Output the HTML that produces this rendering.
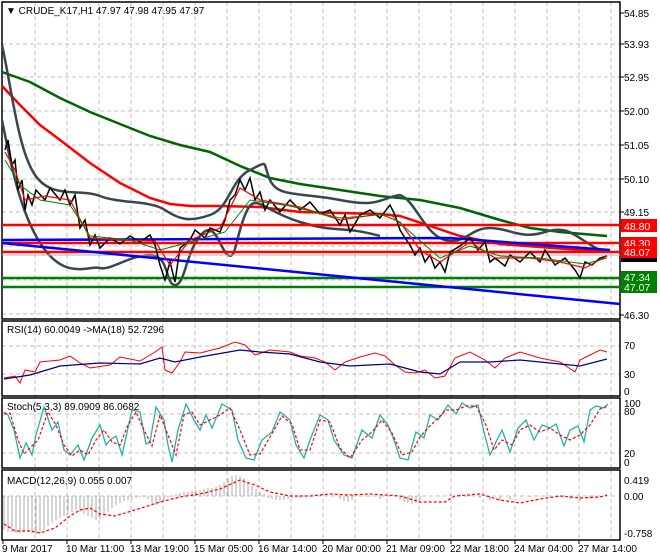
<!DOCTYPE html>
<html><head><meta charset="utf-8"><style>
html,body{margin:0;padding:0;background:#fff;}
svg{display:block;font-family:"Liberation Sans",Arial,sans-serif;}
</style></head><body>
<svg width="660" height="560" viewBox="0 0 660 560" xmlns="http://www.w3.org/2000/svg">
<rect width="660" height="560" fill="#fff"/>
<g stroke="#c0c0c0" stroke-dasharray="4,3" stroke-width="1">
<path d="M35 2V540M67 2V540M99 2V540M131 2V540M163 2V540M195 2V540M227 2V540M259 2V540M291 2V540M323 2V540M355 2V540M387 2V540M419 2V540M451 2V540M483 2V540M515 2V540M547 2V540M579 2V540M611 2V540"/>
<path d="M2 44H620M2 77H620M2 111H620M2 145H620M2 179H620M2 212H620M2 246H620M2 280H620M2 314H620"/>
<path d="M2 346H620M2 374H620M2 414H620M2 453H620M2 496H620"/>
</g>
<g fill="none" stroke="#000" stroke-width="1.5">
<rect x="2" y="2" width="618" height="317"/>
<rect x="2" y="321" width="618" height="75"/>
<rect x="2" y="398" width="618" height="70"/>
<rect x="2" y="470" width="618" height="70"/>
</g>
<polyline fill="none" stroke="#006400" stroke-width="2.5" points="2,72 30,82 60,98 90,112 120,124 150,136 180,145 210,152 240,166 270,178 300,184 340,190 380,196 420,200 460,208 500,220 530,228 560,232 607,236"/>
<polyline fill="none" stroke="#ff0000" stroke-width="2.5" points="2,86 20,105 40,125 60,140 90,163 120,183 150,198 170,204 190,206 220,206 260,207 300,212 340,213 380,214 400,216 430,226 460,236 500,244 540,247 580,250 607,251"/>
<g fill="none" stroke="#37474f" stroke-width="2.5">
<path d="M2 45C12 90 18 150 35 175S80 188 100 196 150 200 165 210 190 222 210 215 230 180 250 170 262 162 270 180 300 192 340 200 380 198 400 195 C415 200 425 235 445 240 S470 228 490 228 520 240 545 232 575 238 600 250"/>
<path d="M2 120C12 170 22 220 45 250S90 265 100 268 130 255 150 255 165 285 175 285 185 255 200 236 220 250 228 255 235 240 245 215 260 210 300 222 340 225 380 236 395 245 C410 252 420 272 440 275 S470 265 480 262 510 272 540 268 570 268 578 275 600 268"/>
</g>
<g stroke-width="2.5">
<path d="M2 225H620M2 243H620M2 252H620" stroke="#ff0000"/>
<path d="M2 278H620M2 287H620" stroke="#008000"/>
</g>
<path d="M2 255H620" stroke="#b0b0b0" stroke-width="1"/>
<polyline fill="none" stroke="#0000ff" stroke-width="2.5" points="2,243 620,304"/>
<polyline fill="none" stroke="#0000ff" stroke-width="2.5" points="2,240 450,238 610,250"/>
<polyline fill="none" stroke="#000" stroke-width="1.5" points="5,150 8,140 12,165 15,160 18,190 22,180 25,210 28,195 32,205 36,190 45,200 50,188 60,200 65,190 70,205 75,195 80,228 85,220 90,245 95,235 100,248 110,238 120,244 130,236 140,242 150,235 155,245 160,265 165,280 170,262 175,282 180,248 190,240 195,230 205,238 210,228 220,232 225,220 230,200 235,195 240,180 245,190 250,178 255,200 260,192 265,210 270,200 280,212 290,200 300,210 310,202 320,214 330,210 340,225 345,215 350,232 356,222 360,215 370,210 380,218 390,205 395,215 400,230 405,238 410,245 415,255 420,248 425,262 430,255 435,268 440,262 445,272 450,252 460,246 470,238 478,250 485,242 490,262 495,258 505,266 510,255 520,262 530,252 540,262 545,250 555,265 565,258 575,270 580,278 585,262 592,265 600,258 607,256"/>
<polyline fill="none" stroke="#ff0000" stroke-width="1.2" points="5,152 15,170 25,200 45,196 70,200 90,238 120,240 155,241 170,265 190,240 220,228 240,188 260,200 300,207 340,220 380,214 400,222 420,250 440,262 470,242 495,258 530,258 560,262 585,268 607,256"/>
<polyline fill="none" stroke="#008000" stroke-width="1" points="5,160 20,185 40,200 70,205 90,236 130,240 160,250 190,242 225,232 250,200 290,206 340,218 390,214 410,232 440,258 470,246 500,256 540,258 585,264 607,258"/>
<g font-size="10" fill="#000">
<text x="624" y="17">54.85</text><text x="624" y="48">53.93</text><text x="624" y="81">52.95</text>
<text x="624" y="115">52.00</text><text x="624" y="149">51.05</text><text x="624" y="183">50.10</text>
<text x="624" y="216">49.15</text><text x="624" y="319">46.30</text>
</g>
<g font-size="10.5">
<rect x="621" y="219" width="36" height="13" fill="#ff0000"/><text x="624" y="230" fill="#fff">48.80</text>
<rect x="621" y="237" width="36" height="13" fill="#ff0000"/><text x="624" y="247" fill="#fff">48.30</text>
<rect x="621" y="246" width="36" height="12" fill="#ff0000"/><text x="624" y="256" fill="#fff">48.07</text>
<rect x="621" y="258" width="36" height="4" fill="#000"/>
<rect x="621" y="271" width="36" height="12" fill="#008000"/><text x="624" y="281" fill="#fff">47.34</text>
<rect x="621" y="281" width="36" height="12" fill="#008000"/><text x="624" y="291" fill="#fff">47.07</text>
</g>
<g stroke="#000"><path d="M620 13h4M620 44h4M620 77h4M620 111h4M620 145h4M620 179h4M620 212h4M620 315h4"/></g>
<text x="6" y="14" font-size="10">▼ CRUDE_K17,H1  47.97 47.98 47.95 47.97</text>
<text x="7" y="333" font-size="10">RSI(14) 60.0049  -&gt;MA(18) 52.7296</text>
<polyline fill="none" stroke="#ff0000" stroke-width="1" points="4,378 15,376 20,383 25,370 35,372 40,362 60,360 70,356 80,363 90,368 110,365 120,357 140,361 155,352 162,347 165,370 172,373 180,362 185,352 200,353 220,348 235,342 245,345 255,355 270,350 290,352 300,356 315,358 325,362 335,370 345,362 360,357 375,353 385,356 395,365 405,372 415,373 425,370 435,378 445,376 455,358 470,352 485,360 495,368 505,358 520,352 540,358 560,362 575,372 580,360 590,355 600,350 607,352"/>
<polyline fill="none" stroke="#000080" stroke-width="1.2" points="4,379 30,375 60,366 100,363 140,364 160,358 175,362 200,357 240,350 260,352 290,354 320,362 350,366 390,364 420,372 440,374 460,362 490,362 520,360 560,364 580,366 607,359"/>
<g font-size="10"><text x="624" y="349">70</text><text x="624" y="378">30</text><text x="624" y="395">0</text></g>
<text x="7" y="410" font-size="10">Stoch(5,3,3) 89.0909 86.0682</text>
<polyline fill="none" stroke="#20b2aa" stroke-width="1.3" points="4,412 8,415 14,430 20,458 26,443 32,455 36,435 44,407 52,430 58,422 64,450 70,455 78,445 84,460 92,438 100,425 106,445 110,440 116,436 122,455 132,410 140,412 146,444 150,442 156,407 164,420 168,445 172,462 178,430 186,404 194,420 200,430 206,415 212,428 222,404 232,410 238,440 246,458 254,460 262,440 272,432 280,412 290,420 296,445 304,458 310,440 320,415 328,420 334,440 344,455 352,458 362,430 372,438 380,415 388,425 394,440 400,458 408,460 416,432 424,438 430,415 438,420 448,405 456,414 462,403 470,408 478,405 484,432 490,455 496,442 502,430 510,452 518,428 526,420 534,440 542,425 550,428 556,424 564,446 570,430 578,426 584,442 590,410 596,406 604,408 608,404"/>
<polyline fill="none" stroke="#ff0000" stroke-width="1.2" stroke-dasharray="3,2" points="4,414 10,413 18,440 24,454 30,448 38,440 48,412 56,425 64,445 72,456 80,450 88,455 96,440 104,430 112,442 120,445 128,425 136,412 144,430 152,446 160,415 170,440 176,455 184,415 192,412 200,425 210,420 220,415 230,408 240,430 250,455 260,454 270,437 282,416 292,424 300,450 310,450 320,420 330,422 340,448 350,458 362,440 372,432 382,420 392,433 402,455 412,452 420,437 428,428 436,420 446,410 456,410 466,406 476,406 486,425 494,450 502,440 512,445 520,430 530,425 540,432 550,428 560,435 570,440 580,435 590,425 600,409 608,406"/>
<g font-size="10"><text x="624" y="407">100</text><text x="624" y="415">80</text><text x="624" y="457">20</text><text x="624" y="466">0</text></g>
<text x="7" y="484" font-size="10">MACD(12,26,9) 0.055 0.007</text>
<g stroke="#a9a9a9" stroke-width="1">
<path d="M4 496V530M8 496V532M12 496V532M16 496V533M20 496V533M24 496V532M28 496V531M32 496V533M36 496V534M40 496V534M44 496V530M48 496V526M52 496V522M56 496V520M60 496V518M64 496V516M68 496V514M72 496V512M76 496V510M80 496V512M84 496V514M88 496V516M92 496V518M96 496V520M100 496V519M104 496V516M108 496V512M112 496V508M116 496V505M120 496V503M124 496V501M128 496V500M132 496V499M136 496V498M140 496V497M144 496V497M148 496V499M152 496V503M156 496V505M160 496V503M164 496V500M168 496V498M172 496V496"/>
<path d="M176 496V494M180 496V493M184 496V492M188 496V492M192 496V491M196 496V490M200 496V490M204 496V489M208 496V488M212 496V488M216 496V487M220 496V485M224 496V482M228 496V478M232 496V476M236 496V475M240 496V476M244 496V478M248 496V482M252 496V486M256 496V489M260 496V492M264 496V494"/>
<path d="M268 496V498M272 496V499M276 496V500M280 496V500M284 496V500M288 496V499M292 496V498M296 496V498M300 496V498M340 496V499M344 496V501M348 496V502M352 496V500M380 496V499M400 496V500M404 496V502M408 496V503M412 496V504M416 496V503M420 496V500M450 496V494M460 496V494M470 496V495M480 496V498M490 496V500M500 496V501M510 496V500M530 496V497M560 496V497M570 496V499M580 496V501M590 496V499M600 496V496"/>
</g>
<polyline fill="none" stroke="#ff0000" stroke-width="1.2" stroke-dasharray="3,2" points="4,524 15,531 30,531 40,533 55,528 70,516 80,510 90,508 100,514 115,516 135,510 160,502 180,497 200,494 220,489 240,480 255,485 270,492 290,496 310,496 330,494 350,495 370,494 400,496 420,502 445,502 455,496 480,494 500,500 520,503 540,499 560,496 580,498 600,497 607,495"/>
<g font-size="10"><text x="624" y="484">0.419</text><text x="624" y="500">0.00</text><text x="624" y="537">-0.758</text></g>
<g stroke="#000"><path d="M3 540v4M67 540v4M131 540v4M195 540v4M259 540v4M323 540v4M387 540v4M451 540v4M515 540v4M579 540v4"/></g>
<g font-size="10" textLength="">
<text x="2" y="552">9 Mar 2017</text><text x="66" y="552">10 Mar 11:00</text><text x="130" y="552">13 Mar 19:00</text>
<text x="194" y="552">15 Mar 05:00</text><text x="258" y="552">16 Mar 14:00</text><text x="322" y="552">20 Mar 00:00</text>
<text x="386" y="552">21 Mar 09:00</text><text x="450" y="552">22 Mar 18:00</text><text x="514" y="552">24 Mar 04:00</text>
<text x="578" y="552">27 Mar 14:00</text>
</g>
</svg>
</body></html>
